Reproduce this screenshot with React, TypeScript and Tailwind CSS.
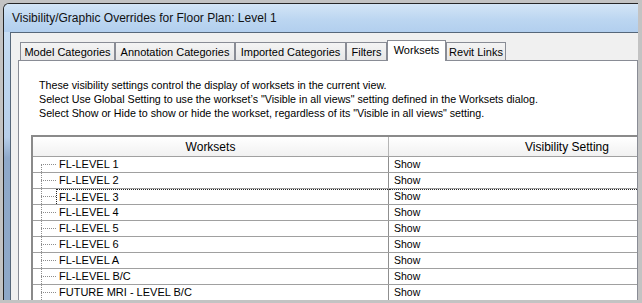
const tabs = [
  { label: "Model Categories", width: "w-[95px]" },
  { label: "Annotation Categories", width: "w-[120px]" },
  { label: "Imported Categories", width: "w-[111px]" },
  { label: "Filters", width: "w-[41px]" },
  { label: "Worksets", width: "w-[59px]", active: true },
  { label: "Revit Links", width: "w-[60px]" },
];

const worksets = [
  "FL-LEVEL 1",
  "FL-LEVEL 2",
  "FL-LEVEL 3",
  "FL-LEVEL 4",
  "FL-LEVEL 5",
  "FL-LEVEL 6",
  "FL-LEVEL A",
  "FL-LEVEL B/C",
  "FUTURE MRI - LEVEL B/C",
];

function WorksetRow({ name, first, focused }: { name: string; first: boolean; focused: boolean }) {
  return (
    <div className="flex h-[16px] border-b border-[#a0a0a0]">
      <div className="flex w-[356px] shrink-0 border-r border-[#8f8f8f]">
        {/* tree connector */}
        <div className="flex w-[23px] shrink-0 flex-col pl-[8px]">
          <div className={`h-[7px] ${first ? "" : "border-l border-dotted border-[#8c8c8c]"}`} />
          <div className="flex-1 border-l border-t border-dotted border-[#8c8c8c]" />
        </div>
        <div
          className={`flex flex-1 items-center pl-[2px] text-[11px] leading-[15px] border-l border-dotted ${
            focused ? "border-t border-[#222]" : "border-transparent"
          }`}
        >
          {name}
        </div>
      </div>
      <div
        className={`flex w-[356px] shrink-0 items-center pl-[5px] text-[10.5px] ${
          focused ? "border-t border-dotted border-[#222]" : ""
        }`}
      >
        Show
      </div>
    </div>
  );
}

export default function App() {
  return (
    <div className="h-[303px] w-[642px] overflow-hidden bg-[#c3c3c3] pb-[3px] pl-[3px] pr-[4px] pt-[3px] font-['Liberation_Sans',Arial,sans-serif] text-black">
      <div className="flex h-full flex-col overflow-hidden rounded-tl-[6px] border-l border-t border-[#262626] bg-[linear-gradient(180deg,#cfe2f5_0%,#c0d8f0_20%,#b7cfea_45%,#8fa9ca_52%,#8ea8c8_100%)]">
        <div className="flex h-[28px] shrink-0 items-center bg-[linear-gradient(180deg,#d3e5f6_0%,#bcd6f1_55%,#b2cfee_100%)] pl-[8px] text-[12px] text-[#111]">
          Visibility/Graphic Overrides for Floor Plan: Level 1
        </div>
        <div className="ml-[6px] flex flex-1 flex-col overflow-hidden border-l border-t border-[#56677a] bg-[#f0f0f0] pl-[7px] pt-[7px]">
          <div className="relative z-10 ml-[2px] flex items-end">
            {tabs.map((t) =>
              t.active ? (
                <div
                  key={t.label}
                  className={`${t.width} -mb-px h-[21px] shrink-0 border border-b-0 border-[#898c95] bg-white pt-[2px] text-center text-[11px] leading-[14px]`}
                >
                  {t.label}
                </div>
              ) : (
                <div
                  key={t.label}
                  className={`${t.width} h-[18px] shrink-0 border border-b-0 border-[#898c95] bg-[linear-gradient(180deg,#f4f4f4_0%,#e7e7e7_100%)] pt-[3px] text-center text-[11px] leading-[13px]`}
                >
                  {t.label}
                </div>
              )
            )}
          </div>
          <div className="flex flex-1 flex-col border-l border-r border-t border-[#898c95] bg-white">
            <div className="pl-[20px] pt-[17px] text-[10.7px] leading-[14px]">
              <p>These visibility settings control the display of worksets in the current view.</p>
              <p>Select Use Global Setting to use the workset’s "Visible in all views" setting defined in the Worksets dialog.</p>
              <p>Select Show or Hide to show or hide the workset, regardless of its "Visible in all views" setting.</p>
            </div>
            <div className="ml-[12px] mt-[15px] flex-1 border-l-2 border-t-2 border-[#8a8a8a]">
              <div className="flex h-[20px] border-b border-[#a0a0a0] bg-[linear-gradient(180deg,#ffffff_0%,#f1f1f1_100%)] text-[12px]">
                <div className="flex w-[356px] shrink-0 items-center justify-center border-r border-[#b5b5b5]">Worksets</div>
                <div className="flex w-[356px] shrink-0 items-center justify-center">Visibility Setting</div>
              </div>
              {worksets.map((w, i) => (
                <WorksetRow key={w} name={w} first={i === 0} focused={i === 2} />
              ))}
            </div>
          </div>
        </div>
      </div>
    </div>
  );
}
